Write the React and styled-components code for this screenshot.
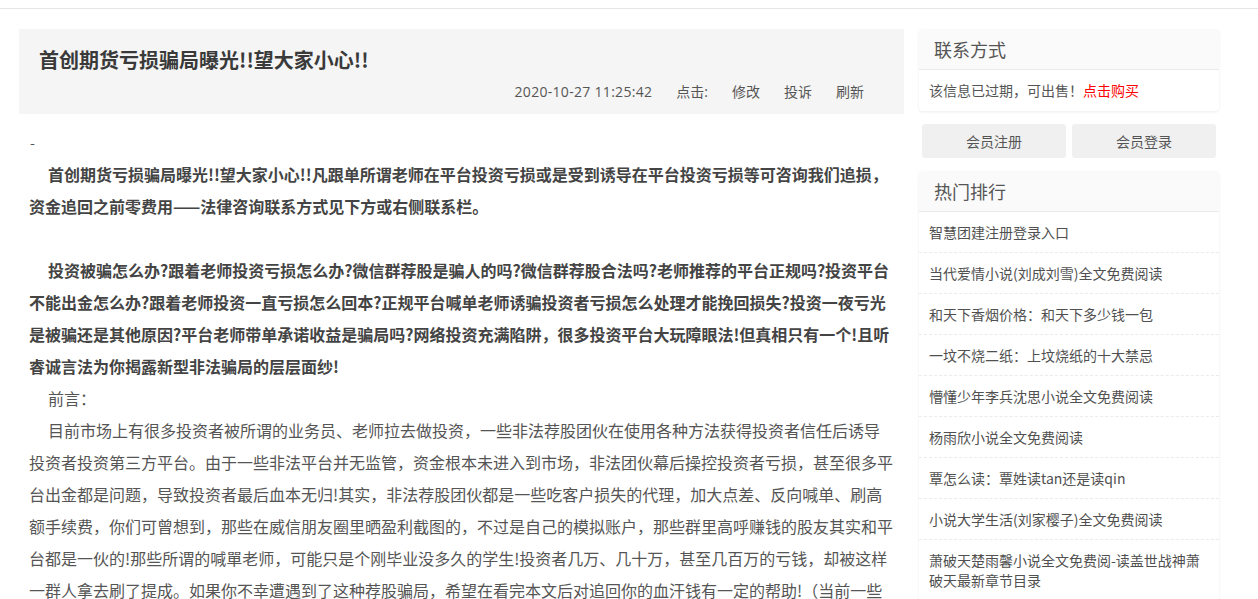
import React from "react";
import styled, { createGlobalStyle } from "styled-components";

const Global = createGlobalStyle`
  html, body { margin: 0; padding: 0; background: #fff; overflow: hidden; }
  body {
    font-family: "Microsoft YaHei", "Noto Sans CJK SC", sans-serif;
    color: #555;
  }
  a { text-decoration: none; color: inherit; }
`;

const TopBar = styled.div`
  height: 8px;
  border-bottom: 1px solid #e6e6e6;
`;

const Container = styled.div`
  width: 1220px;
  margin: 20px auto 0;
  display: flex;
  align-items: flex-start;
  gap: 15px;
`;

const Main = styled.main`
  width: 885px;
  flex: none;
`;

const TitleBox = styled.div`
  background: #f5f5f5;
  padding: 19px 40px 12px 20px;
`;

const Title = styled.h1`
  margin: 0;
  font-size: 20px;
  line-height: 24px;
  font-weight: bold;
  color: #3a3a3a;
`;

const Meta = styled.div`
  margin-top: 10px;
  text-align: right;
  font-family: "Segoe UI", "Open Sans", "Noto Sans CJK SC", sans-serif;
  font-size: 14px;
  line-height: 20px;
  color: #555;
`;

const MetaItem = styled.span`
  margin-left: ${(p) => (p.$first ? 0 : 24)}px;
  letter-spacing: ${(p) => (p.$first ? "0.3px" : "0")};
`;

const Content = styled.div`
  width: 865px;
  padding: 12px 10px 0;
  font-size: 16px;
  line-height: 32px;
`;

const Para = styled.p`
  margin: 0;
  text-indent: ${(p) => (p.$indent ? "19px" : "0")};
  font-weight: ${(p) => (p.$bold ? "bold" : "normal")};
  color: ${(p) => (p.$bold ? "#444" : "#555")};
  min-height: 32px;
  ${(p) => (p.$dash ? "font-size: 14px; padding-left: 1px;" : "")}
`;

const Side = styled.aside`
  width: 300px;
  flex: none;
  display: flex;
  flex-direction: column;
  gap: 13px;
`;

const Card = styled.section`
  background: #fff;
  border-radius: 4px;
  box-shadow: 0 1px 3px rgba(0, 0, 0, 0.08);
  overflow: hidden;
`;

const CardHead = styled.h3`
  margin: 0;
  height: 40px;
  line-height: 40px;
  padding-left: 15px;
  font-size: 18px;
  font-weight: normal;
  color: #555;
  background: #fafafa;
  border-bottom: 1px solid #eaeaea;
`;

const CardBody = styled.div`
  padding: 10px 10px 11px;
  font-size: 14px;
  line-height: 20px;
  color: #555;
`;

const Red = styled.a`
  color: #ff0000;
`;

const BtnRow = styled.div`
  display: flex;
  gap: 6px;
  padding: 0 3px;
`;

const Btn = styled.a`
  flex: 1;
  height: 34px;
  line-height: 34px;
  text-align: center;
  background: #f0f0f0;
  border-radius: 3px;
  font-size: 14px;
  color: #555;
`;

const List = styled.ul`
  list-style: none;
  margin: 0;
  padding: 0;
`;

const Item = styled.li`
  padding: 10px 10px;
  font-size: 14px;
  line-height: 20px;
  color: #505050;
  border-top: ${(p) => (p.$first ? "none" : "1px dashed #ebebeb")};
`;

const hot = [
  "智慧团建注册登录入口",
  "当代爱情小说(刘成刘雪)全文免费阅读",
  "和天下香烟价格：和天下多少钱一包",
  "一坟不烧二纸：上坟烧纸的十大禁忌",
  "懵懂少年李兵沈思小说全文免费阅读",
  "杨雨欣小说全文免费阅读",
  "覃怎么读：覃姓读tan还是读qin",
  "小说大学生活(刘家樱子)全文免费阅读",
  "萧破天楚雨馨小说全文免费阅-读盖世战神萧破天最新章节目录",
];

export default function App() {
  return (
    <>
      <Global />
      <TopBar />
      <Container>
        <Main>
          <TitleBox>
            <Title>首创期货亏损骗局曝光!!望大家小心!!</Title>
            <Meta>
              <MetaItem $first>2020-10-27 11:25:42</MetaItem>
              <MetaItem>点击:</MetaItem>
              <MetaItem>修改</MetaItem>
              <MetaItem>投诉</MetaItem>
              <MetaItem>刷新</MetaItem>
            </Meta>
          </TitleBox>
          <Content>
            <Para $dash>-</Para>
            <Para $bold $indent>
              首创期货亏损骗局曝光!!望大家小心!!凡跟单所谓老师在平台投资亏损或是受到诱导在平台投资亏损等可咨询我们追损，资金追回之前零费用——法律咨询联系方式见下方或右侧联系栏。
            </Para>
            <Para />
            <Para $bold $indent>
              投资被骗怎么办?跟着老师投资亏损怎么办?微信群荐股是骗人的吗?微信群荐股合法吗?老师推荐的平台正规吗?投资平台不能出金怎么办?跟着老师投资一直亏损怎么回本?正规平台喊单老师诱骗投资者亏损怎么处理才能挽回损失?投资一夜亏光是被骗还是其他原因?平台老师带单承诺收益是骗局吗?网络投资充满陷阱，很多投资平台大玩障眼法!但真相只有一个!且听睿诚言法为你揭露新型非法骗局的层层面纱!
            </Para>
            <Para $indent>前言：</Para>
            <Para $indent>
              目前市场上有很多投资者被所谓的业务员、老师拉去做投资，一些非法荐股团伙在使用各种方法获得投资者信任后诱导投资者投资第三方平台。由于一些非法平台并无监管，资金根本未进入到市场，非法团伙幕后操控投资者亏损，甚至很多平台出金都是问题，导致投资者最后血本无归!其实，非法荐股团伙都是一些吃客户损失的代理，加大点差、反向喊单、刷高额手续费，你们可曾想到，那些在威信朋友圈里晒盈利截图的，不过是自己的模拟账户，那些群里高呼赚钱的股友其实和平台都是一伙的!那些所谓的喊單老师，可能只是个刚毕业没多久的学生!投资者几万、几十万，甚至几百万的亏钱，却被这样一群人拿去刷了提成。如果你不幸遭遇到了这种荐股骗局，希望在看完本文后对追回你的血汗钱有一定的帮助!（当前一些平台已被立案调查）
            </Para>
          </Content>
        </Main>
        <Side>
          <Card>
            <CardHead>联系方式</CardHead>
            <CardBody>
              该信息已过期，可出售！<Red href="#">点击购买</Red>
            </CardBody>
          </Card>
          <BtnRow>
            <Btn href="#">会员注册</Btn>
            <Btn href="#">会员登录</Btn>
          </BtnRow>
          <Card>
            <CardHead>热门排行</CardHead>
            <List>
              {hot.map((t, i) => (
                <Item key={i} $first={i === 0}>
                  {t}
                </Item>
              ))}
            </List>
          </Card>
        </Side>
      </Container>
    </>
  );
}
